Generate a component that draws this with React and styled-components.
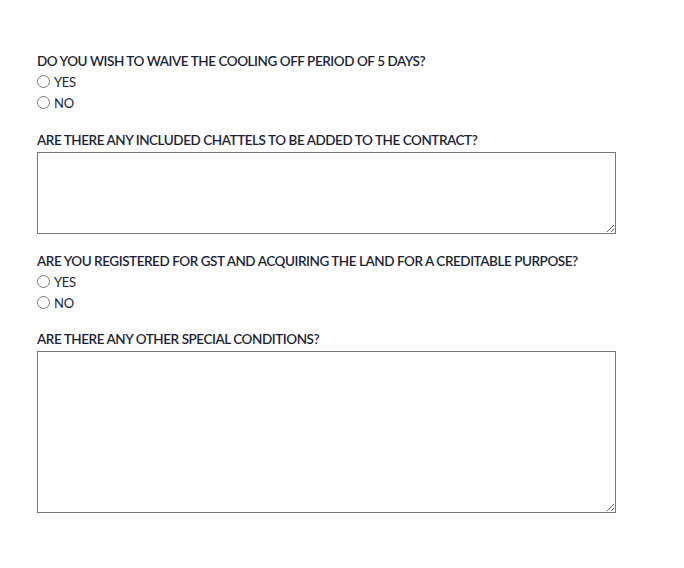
import styled, { createGlobalStyle } from "styled-components";

const GlobalStyle = createGlobalStyle`
  body {
    margin: 0;
    background: #fff;
    font-family: Lato, "Liberation Sans", sans-serif;
    color: #1c1f33;
  }
`;

const Form = styled.form`
  padding: 53px 0 0 37px;
  width: 579px;
`;

const Field = styled.div`
  margin-bottom: ${(props) => props.$gap}px;
`;

const Question = styled.div`
  font-size: 13.5px;
  font-weight: 600;
  letter-spacing: -0.45px;
  line-height: 16px;
  margin-bottom: 2px;
`;

const Option = styled.label`
  display: flex;
  align-items: center;
  gap: 4px;
  height: 21px;
  font-size: 13px;
  letter-spacing: -0.3px;
`;

const Radio = styled.input.attrs({ type: "radio" })`
  width: 13px;
  height: 13px;
  margin: 0;
`;

const TextArea = styled.textarea`
  display: block;
  box-sizing: border-box;
  width: 579px;
  height: ${(props) => props.$height}px;
  border: 1px solid #777;
  margin: 4px 0 0;
  resize: vertical;
  font-family: inherit;
`;

export default function App() {
  return (
    <>
      <GlobalStyle />
      <Form>
        <Field $gap={19}>
          <Question>DO YOU WISH TO WAIVE THE COOLING OFF PERIOD OF 5 DAYS?</Question>
          <Option>
            <Radio name="waive" /> YES
          </Option>
          <Option>
            <Radio name="waive" /> NO
          </Option>
        </Field>
        <Field $gap={19}>
          <Question>ARE THERE ANY INCLUDED CHATTELS TO BE ADDED TO THE CONTRACT?</Question>
          <TextArea $height={82} />
        </Field>
        <Field $gap={18}>
          <Question>ARE YOU REGISTERED FOR GST AND ACQUIRING THE LAND FOR A CREDITABLE PURPOSE?</Question>
          <Option>
            <Radio name="gst" /> YES
          </Option>
          <Option>
            <Radio name="gst" /> NO
          </Option>
        </Field>
        <Field $gap={0}>
          <Question>ARE THERE ANY OTHER SPECIAL CONDITIONS?</Question>
          <TextArea $height={162} />
        </Field>
      </Form>
    </>
  );
}
